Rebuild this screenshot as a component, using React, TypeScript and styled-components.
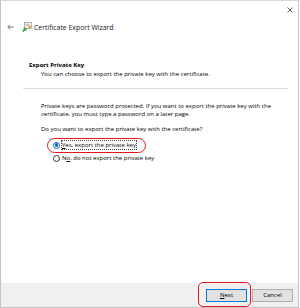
import React from "react";
import styled, { createGlobalStyle } from "styled-components";

const GlobalStyle = createGlobalStyle`
  html, body {
    margin: 0;
    padding: 0;
    background: #ffffff;
  }
  body {
    font-family: "Open Sans", "Noto Sans", sans-serif;
  }
`;

const Window = styled.div`
  width: 299px;
  height: 308px;
  box-sizing: border-box;
  border: 1px solid #c4c4c4;
  border-top-color: #d9d9d9;
  display: flex;
  flex-direction: column;
  background: #ffffff;
  color: #000;
`;

const TopBar = styled.div`
  height: 17px;
  display: flex;
  justify-content: flex-end;
  align-items: center;
  padding-right: 5px;
`;

const CloseGlyph = styled.svg`
  width: 6px;
  height: 6px;
`;

const HeaderRow = styled.div`
  display: flex;
  align-items: center;
  height: 18px;
  padding-left: 6px;
`;

const Title = styled.span`
  font-size: 6.9px;
  color: #1a1a1a;
  margin-left: 2px;
`;

const Body = styled.div`
  flex: 1;
  display: flex;
  flex-direction: column;
  padding: 0 10px 0 0;
`;

const SectionTitle = styled.div`
  font-size: 6px;
  font-weight: 700;
  margin: 25px 0 0 28px;
  line-height: 9px;
`;

const SectionSub = styled.div`
  font-size: 6px;
  margin-left: 40px;
  line-height: 9px;
  white-space: nowrap;
`;

const Separator = styled.div`
  height: 1px;
  background: #dedede;
  margin: 9px 0 0 22px;
`;

const Paragraph = styled.p<{ gap: number }>`
  font-size: 6px;
  line-height: 7.5px;
  margin: ${(p) => p.gap}px 0 0 40px;
  white-space: nowrap;
`;

const Options = styled.div`
  display: flex;
  flex-direction: column;
  margin: 5px 0 0 52px;
`;

const OptionRow = styled.label`
  position: relative;
  display: inline-flex;
  align-self: flex-start;
  align-items: center;
  gap: 2px;
  font-size: 6px;
  height: 13px;
`;

const Annotation = styled.span`
  position: absolute;
  left: -6px;
  right: -10px;
  top: -1px;
  bottom: -1px;
  border: 1.4px solid #e3151d;
  border-radius: 8px;
  pointer-events: none;
`;

const Radio = styled.span<{ checked?: boolean }>`
  width: 7px;
  height: 7px;
  box-sizing: border-box;
  border-radius: 50%;
  border: 0.8px solid ${(p) => (p.checked ? "#0a64c8" : "#333")};
  display: flex;
  align-items: center;
  justify-content: center;
  &::after {
    content: "";
    width: 3.5px;
    height: 3.5px;
    border-radius: 50%;
    background: ${(p) => (p.checked ? "#0a64c8" : "transparent")};
  }
`;

const OptionText = styled.span<{ focused?: boolean }>`
  outline: ${(p) => (p.focused ? "0.8px dotted #444" : "none")};
  line-height: 8px;
  white-space: nowrap;
`;

const Underline = styled.span`
  text-decoration: underline;
`;

const Footer = styled.div`
  height: 24px;
  box-sizing: border-box;
  background: #f0f0f0;
  display: flex;
  justify-content: flex-end;
  align-items: flex-start;
  gap: 5px;
  padding: 6px 5px 0 0;
`;

const ButtonSlot = styled.div`
  position: relative;
`;

const ButtonAnnotation = styled.span`
  position: absolute;
  left: -8px;
  right: -4px;
  top: -7px;
  bottom: -5px;
  border: 1.4px solid #e3151d;
  border-radius: 5px;
  pointer-events: none;
`;

const Button = styled.button<{ primary?: boolean }>`
  display: block;
  width: 41px;
  height: 13px;
  padding: 0;
  font-family: "Open Sans", "Noto Sans", sans-serif;
  font-size: 6px;
  line-height: 11px;
  color: #000;
  background: #e1e1e1;
  border: 1px solid ${(p) => (p.primary ? "#0078d7" : "#adadad")};
  box-sizing: border-box;
`;

function BackArrow() {
  return (
    <svg width="7" height="6" viewBox="0 0 7 6">
      <path d="M6.8 3H0.8M3 0.8L0.8 3L3 5.2" stroke="#555" strokeWidth="0.8" fill="none" />
    </svg>
  );
}

function CertIcon() {
  return (
    <svg width="10" height="10" viewBox="0 0 10 10" style={{ marginLeft: 8 }}>
      <rect x="2.5" y="0.5" width="7" height="6" fill="#f6f6f6" stroke="#8a8a8a" strokeWidth="0.6" />
      <rect x="3.5" y="1.8" width="4" height="0.6" fill="#9a9a9a" />
      <rect x="3.5" y="3" width="3" height="0.6" fill="#9a9a9a" />
      <circle cx="7.5" cy="5" r="1.4" fill="#e0a020" />
      <path d="M0.8 9.4L3.6 6.6" stroke="#2f9a3a" strokeWidth="1.5" />
      <path d="M1.4 6.2h2.6v2.6" stroke="#2f9a3a" strokeWidth="0.9" fill="none" />
    </svg>
  );
}

export default function App() {
  return (
    <>
      <GlobalStyle />
      <Window>
        <TopBar>
          <CloseGlyph viewBox="0 0 6 6">
            <path d="M0.5 0.5L5.5 5.5M5.5 0.5L0.5 5.5" stroke="#333" strokeWidth="0.8" />
          </CloseGlyph>
        </TopBar>
        <HeaderRow>
          <BackArrow />
          <CertIcon />
          <Title>Certificate Export Wizard</Title>
        </HeaderRow>
        <Body>
          <SectionTitle>Export Private Key</SectionTitle>
          <SectionSub>You can choose to export the private key with the certificate.</SectionSub>
          <Separator />
          <Paragraph gap={14}>
            Private keys are password protected. If you want to export the private key with the
            <br />
            certificate, you must type a password on a later page.
          </Paragraph>
          <Paragraph gap={8}>Do you want to export the private key with the certificate?</Paragraph>
          <Options>
            <OptionRow>
              <Annotation />
              <Radio checked />
              <OptionText focused>
                <Underline>Y</Underline>es, export the private key
              </OptionText>
            </OptionRow>
            <OptionRow>
              <Radio />
              <OptionText>
                N<Underline>o</Underline>, do not export the private key
              </OptionText>
            </OptionRow>
          </Options>
        </Body>
        <Footer>
          <ButtonSlot>
            <ButtonAnnotation />
            <Button primary>
              <Underline>N</Underline>ext
            </Button>
          </ButtonSlot>
          <Button>Cancel</Button>
        </Footer>
      </Window>
    </>
  );
}
